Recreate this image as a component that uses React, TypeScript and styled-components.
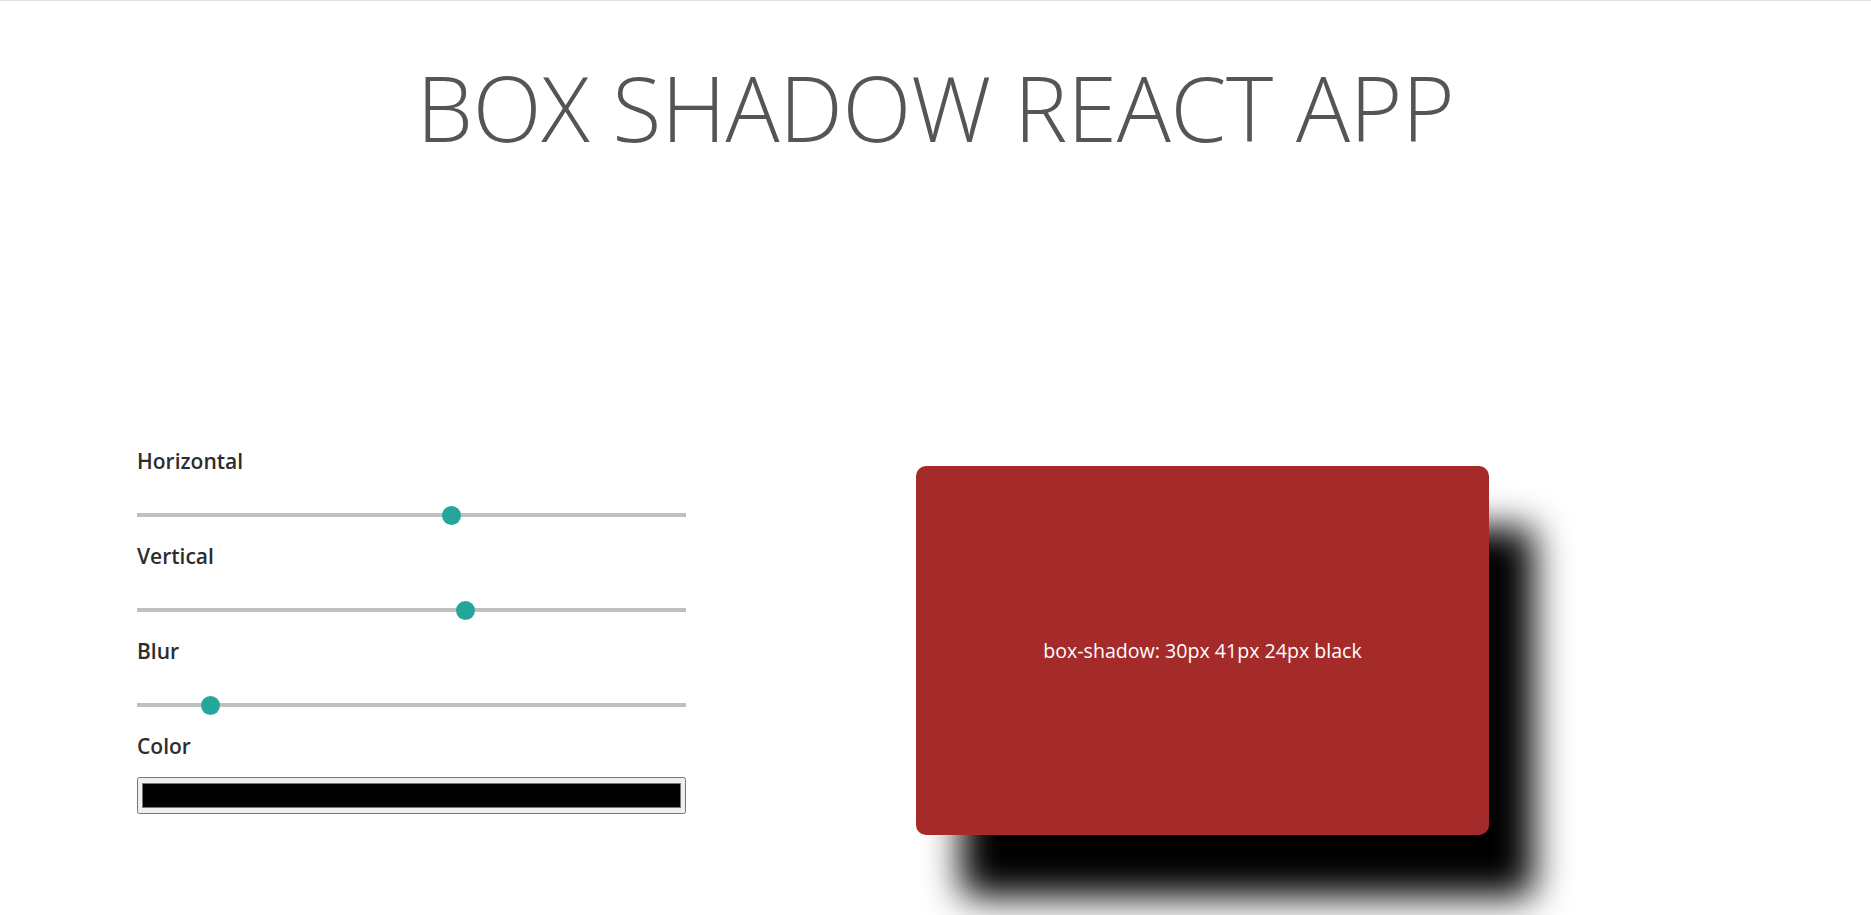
import React, { useState } from "react";
import styled, { createGlobalStyle } from "styled-components";

const GlobalStyle = createGlobalStyle`
  html, body {
    margin: 0;
    padding: 0;
    background: #ffffff;
    font-family: "Open Sans", "Noto Sans", sans-serif;
  }
`;

// the reference was taken at 150% browser zoom, so the drawn shadow is scaled
const ZOOM = 1.5;

const namedColors: Record<string, string> = {
  "#000000": "black",
  "#ffffff": "white",
  "#ff0000": "red",
};

const App: React.FC = () => {
  const [horizontal, setHorizontal] = useState(30);
  const [vertical, setVertical] = useState(41);
  const [blur, setBlur] = useState(24);
  const [color, setColor] = useState("#000000");

  const colorName = namedColors[color] || color;
  const shadowText = `${horizontal}px ${vertical}px ${blur}px ${colorName}`;
  const shadow = `${horizontal * ZOOM}px ${vertical * ZOOM}px ${blur * ZOOM}px ${colorName}`;

  return (
    <Page>
      <GlobalStyle />
      <Title>BOX SHADOW REACT APP</Title>
      <Main>
        <Controls>
          <Field>
            <Label>Horizontal</Label>
            <Range
              type="range"
              min={-200}
              max={200}
              value={horizontal}
              onChange={(e) => setHorizontal(Number(e.target.value))}
            />
          </Field>
          <Field>
            <Label>Vertical</Label>
            <Range
              type="range"
              min={-200}
              max={200}
              value={vertical}
              onChange={(e) => setVertical(Number(e.target.value))}
            />
          </Field>
          <Field>
            <Label>Blur</Label>
            <Range
              type="range"
              min={0}
              max={200}
              value={blur}
              onChange={(e) => setBlur(Number(e.target.value))}
            />
          </Field>
          <Field>
            <Label>Color</Label>
            <ColorInput
              type="color"
              value={color}
              onChange={(e) => setColor(e.target.value)}
            />
          </Field>
        </Controls>
        <Preview style={{ boxShadow: shadow }}>
          <PreviewText>box-shadow: {shadowText}</PreviewText>
        </Preview>
      </Main>
    </Page>
  );
};

export default App;

const Page = styled("div")`
  min-height: 100vh;
  border-top: 1px solid #e2e2e2;
  box-sizing: border-box;
`;

const Title = styled("h1")`
  margin: 52px 0 0;
  text-align: center;
  font-size: 90px;
  font-weight: 300;
  line-height: 1.2;
  color: #555555;
  letter-spacing: -0.3px;
`;

const Main = styled("div")`
  display: flex;
  align-items: flex-start;
  margin-top: 285px;
  padding-left: 137px;
`;

const Controls = styled("div")`
  display: flex;
  flex-direction: column;
  gap: 16px;
  width: 549px;
`;

const Field = styled("div")`
  display: flex;
  flex-direction: column;
`;

const Label = styled("label")`
  font-size: 21px;
  font-weight: 600;
  line-height: 30px;
  color: #2d2d2d;
`;

const Range = styled("input")`
  -webkit-appearance: none;
  appearance: none;
  width: 100%;
  height: 20px;
  margin: 29px 0 0;
  background: transparent;
  outline: none;

  &::-webkit-slider-runnable-track {
    height: 4px;
    background: #c0bfc0;
    border: none;
  }

  &::-webkit-slider-thumb {
    -webkit-appearance: none;
    appearance: none;
    width: 19px;
    height: 19px;
    margin-top: -7.5px;
    border-radius: 50%;
    background: #26a69a;
    border: none;
    cursor: pointer;
  }
`;

const ColorInput = styled("input")`
  width: 100%;
  height: 37px;
  margin: 16px 0 0;
  box-sizing: border-box;
  cursor: pointer;
`;

const Preview = styled("div")`
  display: flex;
  align-items: center;
  justify-content: center;
  width: 573px;
  height: 369px;
  margin-left: 230px;
  margin-top: 20px;
  border-radius: 10px;
  background: #a52a2a;
`;

const PreviewText = styled("span")`
  font-size: 19.6px;
  color: #ffffff;
`;
